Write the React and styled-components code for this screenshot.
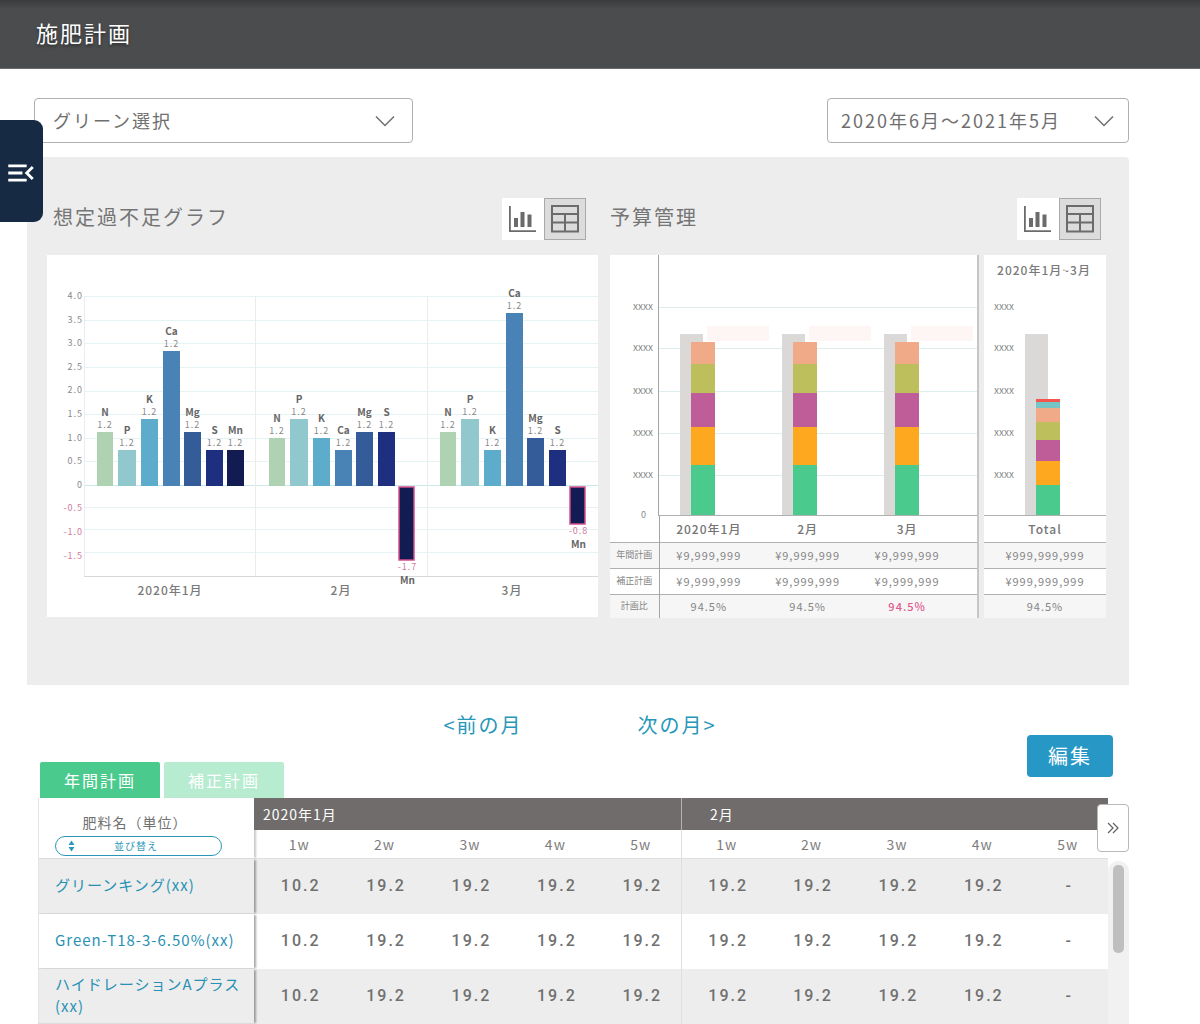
import React, { useState } from "react";
import styled, { createGlobalStyle } from "styled-components";
import { MdMenuOpen } from "react-icons/md";

const GlobalStyle = createGlobalStyle`
  * {
    box-sizing: border-box;
  }
  body {
    margin: 0;
    background: #fff;
    color: #707070;
    font-family: "Noto Sans CJK JP", "Noto Sans", sans-serif;
    letter-spacing: 1px;
  }
  button, select {
    font-family: inherit;
    letter-spacing: inherit;
    color: inherit;
  }
  button {
    cursor: pointer;
  }
`;

const Header = styled.header`
  height: 69px;
  padding: 0 36px 4px;
  display: flex;
  align-items: center;
  background: linear-gradient(#3a3b3d, #4b4c4e 9px);
  border-bottom: 1px solid #6a6a6a;
`;

const PageTitle = styled.h1`
  margin: 0;
  font-size: 22px;
  line-height: 32px;
  font-weight: 400;
  letter-spacing: 2px;
  color: #fff;
  text-shadow: 0 2px 3px rgba(0, 0, 0, 0.4);
`;

const MenuTab = styled.button`
  position: absolute;
  z-index: 2;
  top: 120px;
  left: 0;
  width: 43px;
  height: 102px;
  padding: 3px 0 0 4px;
  border: 0;
  border-radius: 0 9px 9px 0;
  background: #162a43;
  color: #fff;
  display: flex;
  align-items: center;
  font-size: 34px;
`;

const Main = styled.main`
  padding: 29px 71px 0 27px;
`;

const Toolbar = styled.div`
  display: flex;
  justify-content: space-between;
  gap: 24px;
  padding-left: 7px;
  margin-bottom: 14px;
`;

const SelectBox = styled.div`
  display: grid;
  align-items: center;
  width: ${({ $width }) => $width}px;
  height: 45px;

  & > * {
    grid-area: 1 / 1;
  }
  svg {
    justify-self: end;
    margin-right: ${({ $arrow }) => $arrow}px;
    pointer-events: none;
  }
`;

const Select = styled.select`
  appearance: none;
  width: 100%;
  height: 100%;
  padding: 0 48px 1px ${({ $indent }) => $indent}px;
  border: 1px solid #b0b0b0;
  border-radius: 4px;
  background: #fff;
  color: #6f6f6f;
  font-size: 18px;
  letter-spacing: 2px;
`;

const Panel = styled.section`
  display: grid;
  grid-template-columns: minmax(0, 551fr) minmax(0, 496fr);
  column-gap: 12px;
  padding: 41px 23px 67px 20px;
  border-radius: 4px 4px 0 0;
  background: #ededed;
`;

const ChartHead = styled.div`
  display: flex;
  justify-content: space-between;
  align-items: flex-start;
  height: 57px;
  padding: 0 ${({ $right }) => $right}px 0 ${({ $left }) => $left}px;
`;

const ChartTitle = styled.h2`
  margin: 0;
  font-size: 20px;
  line-height: 38px;
  font-weight: 400;
  letter-spacing: 2px;
  color: #757575;
`;

const ToggleGroup = styled.div`
  display: flex;
`;

const ToggleButton = styled.button`
  width: 42px;
  height: 42px;
  padding: 0;
  border: 0;
  background: ${({ $active }) => ($active ? "#dcdcdc" : "#fff")};
  box-shadow: ${({ $active }) => ($active ? "inset 0 0 0 1px #a9a9a9" : "none")};

  svg {
    display: block;
  }
`;

const ChartCard = styled.div`
  background: #fff;
`;

const ChartSvg = styled.svg`
  display: block;
  width: 100%;
  height: auto;
  overflow: visible;

  text {
    text-anchor: middle;
    font-size: 9px;
    fill: #8a8a8a;
  }
  .symbol {
    font-size: 10px;
    font-weight: 700;
    letter-spacing: 0;
    fill: #666;
  }
  .negative {
    fill: #d07a9e;
  }
  .month {
    font-size: 12px;
    font-weight: 500;
    fill: #7a7a7a;
  }
  .tick {
    font-size: 10px;
    letter-spacing: 0;
  }
`;

const BudgetLayout = styled.div`
  display: grid;
  grid-template-columns: minmax(0, 369fr) minmax(0, 122fr);
  column-gap: 5px;
`;

const BudgetCard = styled(ChartCard)`
  border-right: ${({ $edge }) => ($edge ? "2px solid #c6c6c6" : "0")};
`;

const BudgetTable = styled.table`
  width: 100%;
  table-layout: fixed;
  border-collapse: collapse;
  font-size: 11px;
  line-height: 16px;
  color: #858585;

  th, td {
    height: 26px;
    padding: 0;
    font-weight: 400;
    text-align: center;
    white-space: nowrap;
    border-top: 1px solid #b0b0b0;
  }
  thead th {
    border-top: 0;
    font-size: 12px;
    font-weight: 500;
    color: #757575;
  }
  thead td {
    border-top: 0;
  }
  tbody tr:nth-child(odd) {
    background: #f6f6f6;
  }
  tbody tr:last-child td, tbody tr:last-child th {
    height: 24px;
  }
  thead td:first-child, tbody th {
    border-right: 1px solid #a5a5a5;
    font-size: 9px;
    letter-spacing: 0;
  }
`;

const Col = styled.col`
  width: ${({ $width }) => $width};
`;

const BudgetCell = styled.td`
  && {
    padding-right: ${({ $last }) => ($last ? 20 : 0)}px;
    color: ${({ $alert }) => ($alert ? "#df5a8f" : "inherit")};
    font-weight: ${({ $alert }) => ($alert ? 500 : 400)};
  }
`;

const BudgetHead = styled.th`
  && {
    padding-right: ${({ $last }) => ($last ? 20 : 0)}px;
  }
`;

const MonthNav = styled.nav`
  display: flex;
  justify-content: center;
  gap: 115px;
  padding: 30px 0 0 4px;
`;

const MonthLink = styled.a`
  font-size: 20px;
  line-height: 20px;
  font-weight: 400;
  letter-spacing: 2px;
  color: #2797ba;
  text-decoration: none;
`;

const Actions = styled.div`
  display: flex;
  justify-content: space-between;
  align-items: flex-end;
  padding: 0 16px 0 13px;
`;

const Tabs = styled.div`
  display: flex;
  gap: 4px;
`;

const Tab = styled.button`
  width: 120px;
  height: 36px;
  padding: 0;
  border: 0;
  border-radius: 2px 2px 0 0;
  background: ${({ $active }) => ($active ? "#4bca8d" : "#b8ecd1")};
  color: #fff;
  font-size: 16px;
  font-weight: 400;
  letter-spacing: 2px;
`;

const EditButton = styled.button`
  width: 86px;
  height: 42px;
  margin-bottom: 21px;
  padding: 0 0 2px;
  border: 0;
  border-radius: 4px;
  background: #2797c5;
  color: #fff;
  font-size: 20px;
  font-weight: 400;
  letter-spacing: 2px;
`;

const PlanArea = styled.div`
  position: relative;
  display: flex;
  padding-left: 11px;
`;

const PlanScroll = styled.div`
  flex: 1;
  min-width: 0;
`;

const PlanTable = styled.table`
  width: 100%;
  table-layout: fixed;
  border-collapse: separate;
  border-spacing: 0;
`;

const NameHead = styled.th`
  height: 61px;
  padding: 8px 0 0 16px;
  vertical-align: middle;
  text-align: left;
  background: #fff;
  border-left: 1px solid #e4e4e4;
  border-bottom: 1px solid #e0e0e0;
  box-shadow: 3px 0 2px -1px rgba(0, 0, 0, 0.22);
`;

const NameLabel = styled.div`
  width: 160px;
  font-size: 14px;
  line-height: 28px;
  font-weight: 400;
  text-align: center;
`;

const SortButton = styled.button`
  display: flex;
  align-items: center;
  width: 167px;
  height: 20px;
  padding: 0 12px;
  border: 1px solid #2b97b8;
  border-radius: 10px;
  background: #fff;
  color: #2b97b8;
  font-size: 10px;
  line-height: 18px;

  span {
    flex: 1;
    padding-right: 12px;
    text-align: center;
  }
`;

const MonthHead = styled.th`
  height: 32px;
  padding: 0 0 0 ${({ $indent }) => $indent}px;
  border-left: ${({ $divided }) => ($divided ? "1px solid #b5b3b2" : "0")};
  background: #706c6b;
  color: #fff;
  font-size: 14px;
  line-height: 20px;
  font-weight: 400;
  text-align: left;
`;

const WeekHead = styled.th`
  height: 29px;
  padding: 0 0 0 5px;
  border-left: ${({ $divided }) => ($divided ? "1px solid #dedede" : "0")};
  border-bottom: 1px solid #e0e0e0;
  font-size: 14px;
  line-height: 20px;
  font-weight: 400;
  color: #7d7d7d;
`;

const PlanRow = styled.tr`
  background: ${({ $shaded }) => ($shaded ? "#ededed" : "#fff")};
`;

const NameCell = styled.th`
  height: 55px;
  padding: 0 4px 2px 16px;
  background: inherit;
  border-left: 1px solid #e4e4e4;
  border-bottom: 1px solid #dcdcdc;
  box-shadow: 3px 0 2px -1px rgba(0, 0, 0, 0.35);
  font-size: 15px;
  line-height: 22px;
  font-weight: 400;
  text-align: left;

  a {
    color: #2791b4;
    text-decoration: none;
  }
`;

const ValueCell = styled.td`
  padding: 0 0 2px 8px;
  border-left: ${({ $divided }) => ($divided ? "1px solid #dedede" : "0")};
  font-family: Roboto, "Noto Sans CJK JP", sans-serif;
  font-size: 16px;
  font-weight: 500;
  letter-spacing: 2px;
  line-height: 24px;
  text-align: center;
  color: #707070;
`;

const NextButton = styled.button`
  position: absolute;
  top: 6px;
  right: 0;
  width: 32px;
  height: 48px;
  padding: 0;
  display: flex;
  align-items: center;
  justify-content: center;
  border: 1px solid #b8b8b8;
  border-radius: 4px;
  background: #fff;
`;

const ScrollTrack = styled.div`
  width: 21px;
  margin-top: 63px;
  padding: 4px 5px;
  border-radius: 10px 10px 0 0;
  background: #f1f1f1;
`;

const ScrollThumb = styled.div`
  height: 88px;
  border-radius: 5px;
  background: #bfbfbf;
`;

const ELEMENTS = [
  { name: "N", color: "#aed2b2", x: 0, width: 16 },
  { name: "P", color: "#90c8cd", x: 21, width: 18 },
  { name: "K", color: "#5daccc", x: 44, width: 17 },
  { name: "Ca", color: "#4983b5", x: 66, width: 17 },
  { name: "Mg", color: "#335c99", x: 87, width: 17 },
  { name: "S", color: "#1e2f80", x: 109, width: 17 },
  { name: "Mn", color: "#121b52", x: 130, width: 17 },
];

// bar lengths in chart units, negative ones hang below the zero line
const BALANCE = [
  { month: "2020年1月", x: 50, center: 123, bars: [54, 36, 67, 135, 54, 36, 36] },
  { month: "2月", x: 222, center: 294, bars: [48, 67, 48, 36, 54, 54, -74], low: "-1.7" },
  { month: "3月", x: 393, center: 465, bars: [54, 67, 36, 173, 48, 36, -38], low: "-0.8" },
];

const TICKS = ["4.0", "3.5", "3.0", "2.5", "2.0", "1.5", "1.0", "0.5", "0", "-0.5", "-1.0", "-1.5"];
const GRID_LINES = [41, 65, 88, 112, 136, 159, 183, 206, 230, 252, 274, 297];

const BUDGET_LINES = [52, 93, 136, 178, 220];

const STACK = [
  { top: 87, color: "#f0aa87" },
  { top: 109, color: "#bcbf5c" },
  { top: 138, color: "#bf5d98" },
  { top: 172, color: "#fda81f" },
  { top: 210, color: "#4bca8d" },
];

const TOTAL_STACK = [
  { top: 144, color: "#f5544f" },
  { top: 147, color: "#76c5c6" },
  { top: 153, color: "#f0aa87" },
  { top: 167, color: "#bcbf5c" },
  { top: 185, color: "#bf5d98" },
  { top: 206, color: "#fda81f" },
  { top: 230, color: "#4bca8d" },
];

const WEEKS = ["1w", "2w", "3w", "4w", "5w"];

const FERTILIZERS = ["グリーンキング(xx)", "Green-T18-3-6.50%(xx)", "ハイドレーションAプラス(xx)"];

const VALUES = ["10.2", "19.2", "19.2", "19.2", "19.2", "19.2", "19.2", "19.2", "19.2", "-"];

const Chevron = () => (
  <svg width="20" height="12" viewBox="0 0 20 12" fill="none" stroke="#6f6f6f" strokeWidth="1.5">
    <path d="M1 1.5 10 10.5 19 1.5" />
  </svg>
);

const BarIcon = () => (
  <svg width="42" height="42" viewBox="0 0 42 42" fill="#6b6b6b">
    <path d="M7 8h1.8v24.2H34V34H7z" />
    <rect x="12" y="20" width="4" height="9" />
    <rect x="18.5" y="14" width="4" height="15" />
    <rect x="25.5" y="16.5" width="4" height="12.5" />
  </svg>
);

const TableIcon = () => (
  <svg width="42" height="42" viewBox="0 0 42 42" fill="none" stroke="#6b6b6b" strokeWidth="2">
    <rect x="8" y="8" width="26" height="25.5" />
    <path d="M8 16h26M8 24.5h26M21 16v17" />
  </svg>
);

const ViewToggle = ({ label }) => {
  const [view, setView] = useState("table");
  return (
    <ToggleGroup role="group" aria-label={label}>
      <ToggleButton type="button" aria-label="グラフ表示" $active={view === "chart"} onClick={() => setView("chart")}>
        <BarIcon />
      </ToggleButton>
      <ToggleButton type="button" aria-label="表表示" $active={view === "table"} onClick={() => setView("table")}>
        <TableIcon />
      </ToggleButton>
    </ToggleGroup>
  );
};

const BalanceBar = ({ element, length, groupX, low }) => {
  const x = groupX + element.x;
  const center = x + element.width / 2;
  if (length < 0) {
    return (
      <g>
        <rect x={x} y="232" width={element.width - 2} height={-length - 1} fill={element.color} stroke="#d34f8d" strokeWidth="1.5" />
        <text className="negative" x={center} y={241 - length}>{low}</text>
        <text className="symbol" x={center} y={255 - length}>{element.name}</text>
      </g>
    );
  }
  const top = 231 - length;
  return (
    <g>
      <rect x={x} y={top} width={element.width} height={length} fill={element.color} />
      <text className="symbol" x={center} y={top - 16}>{element.name}</text>
      <text x={center} y={top - 4}>1.2</text>
    </g>
  );
};

const BalanceChart = () => (
  <ChartSvg viewBox="0 0 551 362" role="img" aria-label="想定過不足グラフ">
    {GRID_LINES.map((y) => (
      <path key={y} d={`M38 ${y + 0.5}H551`} stroke={y === 230 ? "#c9e8e6" : "#e4f3f3"} />
    ))}
    <path d="M37.5 41V321M208.5 41V321M380.5 41V321" stroke="#ececec" />
    <path d="M37 321.5H551" stroke="#d8d8d8" />
    {TICKS.map((tick, i) => (
      <text
        key={tick}
        className={tick.startsWith("-") ? "negative" : undefined}
        x="36"
        y={Math.round(44 + i * 23.6)}
        style={{ textAnchor: "end" }}
      >
        {tick}
      </text>
    ))}
    {BALANCE.map((group) => (
      <g key={group.month}>
        {group.bars.map((length, i) => (
          <BalanceBar key={ELEMENTS[i].name} element={ELEMENTS[i]} length={length} groupX={group.x} low={group.low} />
        ))}
        <text className="month" x={group.center} y="340">{group.month}</text>
      </g>
    ))}
  </ChartSvg>
);

const StackedBar = ({ x, segments }) => (
  <g>
    <rect x={x} y="79" width="23" height="181" fill="#dbd9d8" />
    {segments.map((segment, i) => {
      const bottom = i + 1 < segments.length ? segments[i + 1].top : 260;
      return <rect key={segment.color} x={x + 11} y={segment.top} width="24" height={bottom - segment.top} fill={segment.color} />;
    })}
  </g>
);

const BudgetChart = () => (
  <ChartSvg viewBox="0 0 367 261" role="img" aria-label="予算管理">
    {BUDGET_LINES.map((y) => (
      <g key={y}>
        <path d={`M49 ${y + 0.5}H367`} stroke="#dceeee" />
        <text className="tick" x="33" y={y + 3}>xxxx</text>
      </g>
    ))}
    <text x="34" y="263">0</text>
    {[70, 172, 274].map((x) => (
      <g key={x}>
        <rect x={x + 27} y="71" width="62" height="15" fill="#fef5f5" />
        <StackedBar x={x} segments={STACK} />
      </g>
    ))}
    <path d="M48.5 0V261" stroke="#a5a5a5" />
    <path d="M49 260.5H367" stroke="#b0b0b0" />
  </ChartSvg>
);

const TotalChart = () => (
  <ChartSvg viewBox="0 0 122 261" role="img" aria-label="予算管理 合計">
    <text className="month" x="60" y="20">2020年1月~3月</text>
    {BUDGET_LINES.map((y) => (
      <text key={y} className="tick" x="20" y={y + 3}>xxxx</text>
    ))}
    <StackedBar x={41} segments={TOTAL_STACK} />
    <path d="M0 260.5H122" stroke="#b0b0b0" />
  </ChartSvg>
);

const Budget = () => (
  <BudgetLayout>
    <BudgetCard $edge>
      <BudgetChart />
      <BudgetTable>
        <colgroup>
          <Col $width="49px" />
          <Col $width="27%" />
          <Col $width="27%" />
          <Col />
        </colgroup>
        <thead>
          <tr>
            <td />
            <BudgetHead scope="col">2020年1月</BudgetHead>
            <BudgetHead scope="col">2月</BudgetHead>
            <BudgetHead scope="col" $last>3月</BudgetHead>
          </tr>
        </thead>
        <tbody>
          {["年間計画", "補正計画"].map((label) => (
            <tr key={label}>
              <th scope="row">{label}</th>
              <BudgetCell>¥9,999,999</BudgetCell>
              <BudgetCell>¥9,999,999</BudgetCell>
              <BudgetCell $last>¥9,999,999</BudgetCell>
            </tr>
          ))}
          <tr>
            <th scope="row">計画比</th>
            <BudgetCell>94.5%</BudgetCell>
            <BudgetCell>94.5%</BudgetCell>
            <BudgetCell $last $alert>94.5%</BudgetCell>
          </tr>
        </tbody>
      </BudgetTable>
    </BudgetCard>
    <BudgetCard>
      <TotalChart />
      <BudgetTable>
        <thead>
          <tr>
            <BudgetHead scope="col">Total</BudgetHead>
          </tr>
        </thead>
        <tbody>
          {["¥999,999,999", "¥999,999,999", "94.5%"].map((value, i) => (
            <tr key={i}>
              <BudgetCell>{value}</BudgetCell>
            </tr>
          ))}
        </tbody>
      </BudgetTable>
    </BudgetCard>
  </BudgetLayout>
);

const Plan = () => (
  <PlanArea>
    <PlanScroll>
      <PlanTable>
        <colgroup>
          <Col $width="216px" />
          {VALUES.map((_, i) => (
            <Col key={i} />
          ))}
        </colgroup>
        <thead>
          <tr>
            <NameHead rowSpan={2} scope="col">
              <NameLabel>肥料名（単位）</NameLabel>
              <SortButton type="button">
                <svg width="7" height="12" viewBox="0 0 7 12" fill="currentColor">
                  <path d="M3.5 0.5 6.5 5H0.5zM3.5 11.5 0.5 7h6z" />
                </svg>
                <span>並び替え</span>
              </SortButton>
            </NameHead>
            <MonthHead colSpan={5} $indent={9}>2020年1月</MonthHead>
            <MonthHead colSpan={5} $indent={28} $divided>2月</MonthHead>
          </tr>
          <tr>
            {[...WEEKS, ...WEEKS].map((week, i) => (
              <WeekHead key={i} scope="col" $divided={i === 5}>{week}</WeekHead>
            ))}
          </tr>
        </thead>
        <tbody>
          {FERTILIZERS.map((name, row) => (
            <PlanRow key={name} $shaded={row % 2 === 0}>
              <NameCell scope="row">
                <a href="#detail">{name}</a>
              </NameCell>
              {VALUES.map((value, i) => (
                <ValueCell key={i} $divided={i === 5}>{value}</ValueCell>
              ))}
            </PlanRow>
          ))}
        </tbody>
      </PlanTable>
    </PlanScroll>
    <ScrollTrack>
      <ScrollThumb />
    </ScrollTrack>
    <NextButton type="button" aria-label="次へ">
      <svg width="12" height="12" viewBox="0 0 12 12" fill="none" stroke="#5f5f5f" strokeWidth="1.2">
        <path d="M1 1l5 5-5 5M6 1l5 5-5 5" />
      </svg>
    </NextButton>
  </PlanArea>
);

const App = () => {
  const [tab, setTab] = useState("annual");
  return (
    <>
      <GlobalStyle />
      <Header>
        <PageTitle>施肥計画</PageTitle>
      </Header>
      <MenuTab type="button" aria-label="メニュー">
        <MdMenuOpen />
      </MenuTab>
      <Main>
        <Toolbar>
          <SelectBox $width={379} $arrow={18}>
            <Select aria-label="グリーン" $indent={18}>
              <option>グリーン選択</option>
            </Select>
            <Chevron />
          </SelectBox>
          <SelectBox $width={302} $arrow={15}>
            <Select aria-label="期間" $indent={13}>
              <option>2020年6月～2021年5月</option>
            </Select>
            <Chevron />
          </SelectBox>
        </Toolbar>
        <Panel>
          <div>
            <ChartHead $left={6} $right={12}>
              <ChartTitle>想定過不足グラフ</ChartTitle>
              <ViewToggle label="想定過不足グラフの表示" />
            </ChartHead>
            <ChartCard>
              <BalanceChart />
            </ChartCard>
          </div>
          <div>
            <ChartHead $left={0} $right={5}>
              <ChartTitle>予算管理</ChartTitle>
              <ViewToggle label="予算管理の表示" />
            </ChartHead>
            <Budget />
          </div>
        </Panel>
        <MonthNav>
          <MonthLink href="#prev">&lt;前の月</MonthLink>
          <MonthLink href="#next">次の月&gt;</MonthLink>
        </MonthNav>
        <Actions>
          <Tabs>
            <Tab type="button" $active={tab === "annual"} onClick={() => setTab("annual")}>年間計画</Tab>
            <Tab type="button" $active={tab === "revised"} onClick={() => setTab("revised")}>補正計画</Tab>
          </Tabs>
          <EditButton type="button">編集</EditButton>
        </Actions>
        <Plan />
      </Main>
    </>
  );
};

export default App;
